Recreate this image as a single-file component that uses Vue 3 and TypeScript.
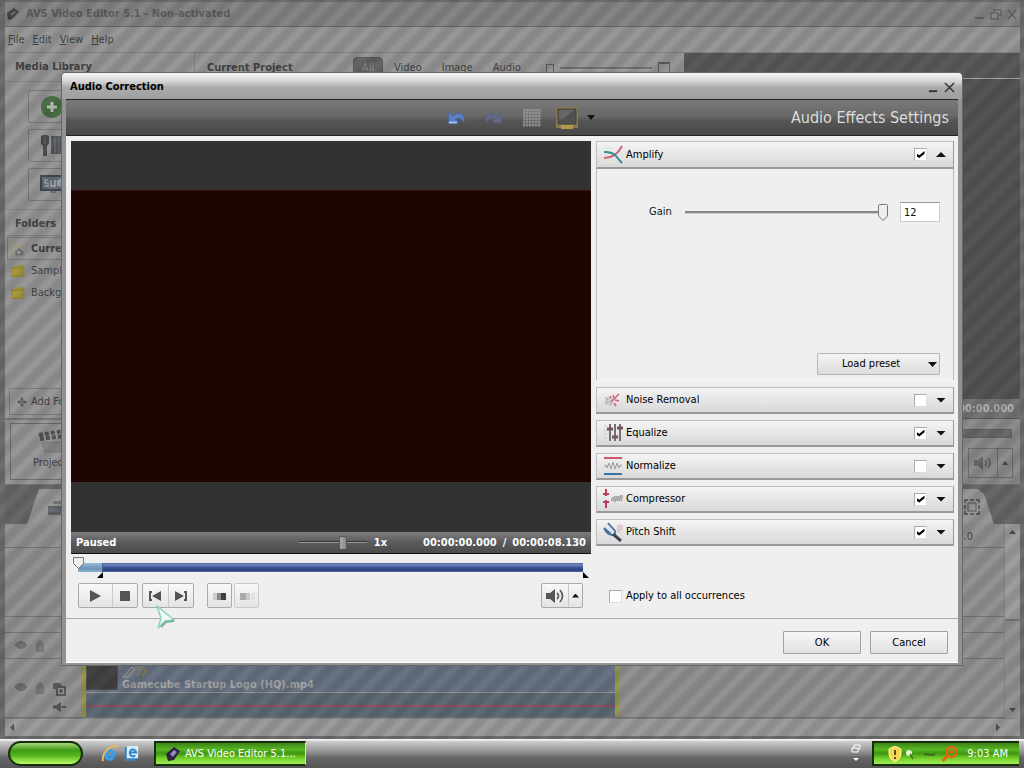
<script setup lang="ts">
import { ref } from 'vue'

interface Effect {
  id: string
  name: string
  enabled: boolean
}

const menus = ['File', 'Edit', 'View', 'Help']
const filters = ['All', 'Video', 'Image', 'Audio']
const folders = ['Current Project', 'Samples', 'Backgrounds']

const amplify = ref(true)
const gain = ref(12)
const speed = ref(67)
const position = ref(0)
const thumbSize = ref(0)
const applyAll = ref(false)
const preset = ref('load')
const effects = ref<Effect[]>([
  { id: 'noise', name: 'Noise Removal', enabled: false },
  { id: 'equalize', name: 'Equalize', enabled: true },
  { id: 'normalize', name: 'Normalize', enabled: false },
  { id: 'compressor', name: 'Compressor', enabled: true },
  { id: 'pitch', name: 'Pitch Shift', enabled: true },
])
</script>

<template>
  <div class="desktop">
    <main class="editor">
      <header class="titlebar">
        <svg class="app-icon" viewBox="0 0 16 16"><path d="M2 7 9 2l5 4-7 7-4 1z" fill="#4c4c4c" /><path d="M5 8l4-3 2 1-4 4z" fill="#777" /><path d="M3 10l3 3" stroke="#3c3c3c" /></svg>
        <span class="app-title">AVS Video Editor 5.1 - Non-activated</span>
        <div class="window-buttons">
          <button aria-label="Minimize"><svg viewBox="0 0 14 14"><path d="M2 11h9" stroke="#666" stroke-width="2" /></svg></button>
          <button aria-label="Restore"><svg viewBox="0 0 14 14"><path d="M5 5V3h7v5h-2M2 6h7v6H2z" fill="none" stroke="#666" stroke-width="1.5" /></svg></button>
          <button aria-label="Close"><svg viewBox="0 0 14 14"><path d="M3 3l8 9M11 3l-8 9" stroke="#666" stroke-width="1.5" /></svg></button>
        </div>
      </header>
      <nav class="menubar">
        <a v-for="m in menus" :key="m" href="#"><u>{{ m[0] }}</u>{{ m.slice(1) }}</a>
      </nav>
      <div class="upper">
        <div class="upper-left">
          <div class="panes">
            <aside class="library">
              <h2>Media Library</h2>
              <div class="tools">
                <button aria-label="Import">
                  <svg viewBox="0 0 24 24"><circle cx="12" cy="12" r="11" fill="#4a7046" /><path d="M12 7v10M7 12h10" stroke="#c2cec0" stroke-width="3" /></svg>
                </button>
                <button aria-label="Capture">
                  <svg viewBox="0 0 24 24"><path d="M1 2q4-2 8 0v8l-2 2v10H3V12L1 10z" fill="#4c5055" /><path d="M11 2h11v18H11z" fill="#565a60" /><path d="M5 3v7M15 4v15M19 4v15" stroke="#7c7c7c" /></svg>
                </button>
                <button aria-label="Search">
                  <svg viewBox="0 0 24 24"><path d="M1 3h23v14H1z" fill="#68727c" stroke="#454b53" stroke-width="2" /><path d="M8 7H5v3h3v3H4M11 7v6h4V7M18 7v6M23 7h-3v6h3" fill="none" stroke="#a5adb5" stroke-width="1.5" /><path d="M10 19h6" fill="none" stroke="#777" stroke-width="2" /></svg>
                </button>
              </div>
              <h2 class="folders-title">Folders</h2>
              <ul class="folders">
                <li v-for="(f, i) in folders" :key="f" :class="{ current: i === 0 }">
                  <svg v-if="i === 0" viewBox="0 0 18 16"><path d="M2 1h13v13H2z" fill="#a09a8a" /><path d="M10 7l5 4v4H6v-4z" fill="#747474" /><circle cx="10" cy="12" r="2" fill="#aaa" /></svg>
                  <svg v-else viewBox="0 0 18 16"><path d="M1 4l7-1 2-2 6 1v12l-14 1z" fill="#9c8e35" /><path d="M3 6h12v7H3z" fill="#aa9c3e" /></svg>
                  <span>{{ f }}</span>
                </li>
              </ul>
              <button class="add-folder"><svg viewBox="0 0 12 12"><path d="M6 1v10M1 6h10" stroke="#555" stroke-width="3" /><path d="M6 3v6M3 6h6" stroke="#8a8a8a" /></svg>Add Folder</button>
            </aside>
            <section class="project">
              <h2>Current Project</h2>
              <div class="filters">
                <button v-for="(f, i) in filters" :key="f" :class="{ active: i === 0 }">{{ f }}</button>
              </div>
              <div class="size-control">
                <i class="small"></i>
                <input v-model="thumbSize" class="bare-range" type="range" aria-label="Thumbnail size" />
                <i class="large"></i>
              </div>
            </section>
          </div>
          <div class="commands">
            <button><svg viewBox="0 0 34 26"><path d="M6 6l24-4M7 10l23-3" stroke="#555" stroke-width="4" stroke-dasharray="4 2" /><path d="M9 13h21l-3 10H12z" fill="#8b8b8b" stroke="#7c7c7c" /></svg>Project</button>
          </div>
        </div>
        <aside class="preview">
          <div class="preview-head"></div>
          <div class="preview-screen"></div>
          <div class="preview-time">00:00:00.000</div>
          <div class="preview-track"></div>
          <div class="preview-volume">
            <button aria-label="Volume"><svg viewBox="0 0 20 16"><path d="M1 5h4l5-4v14l-5-4H1z" fill="#666" /><path d="M12 5q3 3 0 6M15 3q4 5 0 10" fill="none" stroke="#606060" stroke-width="1.5" /></svg></button>
            <button aria-label="Volume menu"><i class="up"></i></button>
          </div>
        </aside>
      </div>
      <div class="tab-strip">
        <div class="tab left"><svg viewBox="0 0 20 18"><path d="M1 8h18v9H1z" fill="#666" /><path d="M6 3h13v3H6z" fill="#777" /><path d="M2 10h10v4H2z" fill="#6c747c" /></svg></div>
        <div class="tab right"><svg viewBox="0 0 16 16"><path d="M1 4V1h3M6 1h4M12 1h3v3M15 6v4M15 12v3h-3M10 15H6M4 15H1v-3M1 10V6" fill="none" stroke="#4e4e4e" stroke-width="1.5" /><path d="M4 4h8v8H4z" fill="none" stroke="#5b5b5b" /></svg></div>
      </div>
      <section class="timeline">
        <div class="ruler"><span>.0</span></div>
        <div class="tracks">
          <div class="track big"></div>
          <div class="track thin"></div>
          <div class="track mid">
            <div class="track-tools">
              <svg viewBox="0 0 14 12"><path d="M1 5q6-7 12 0-6 7-12 0M3 2l2 3M7 1v3M11 2L9 5" fill="#757575" stroke="#6c6c6c" /></svg>
              <svg viewBox="0 0 14 16"><path d="M3 7h8v7H3zM4 7V4q3-4 6 0v3" fill="#808080" stroke="#737373" /></svg>
            </div>
          </div>
          <div class="track main">
            <div class="track-tools">
              <svg viewBox="0 0 14 12"><path d="M1 5q6-7 12 0-6 7-12 0M3 2l2 3M7 1v3M11 2L9 5" fill="#757575" stroke="#6c6c6c" /></svg>
              <svg viewBox="0 0 14 16"><path d="M3 7h8v7H3zM4 7V4q3-4 6 0v3" fill="#808080" stroke="#737373" /></svg>
              <svg class="copy" viewBox="0 0 16 16"><path d="M1 2h7l2 3h4v10H4V8H1z" fill="#5c5c5c" /><path d="M6 7h6v6H6z" fill="#999" /><path d="M9 8v4M7 10h4" stroke="#444" /></svg>
              <svg class="speaker" viewBox="0 0 16 12"><path d="M1 4h4l5-4v12L5 8H1z" fill="#555" /><path d="M11 6h5" stroke="#555" stroke-width="2" /></svg>
            </div>
            <div class="clip">
              <div class="clip-video">
                <div class="clip-thumb"></div>
                <div class="clip-label">
                  <svg viewBox="0 0 28 12"><path d="M1 11L10 1l3 2-7 8z" fill="#777" stroke="#a5a5a5" /><path d="M15 1l4 4-4 5M20 1l4 4-4 5" fill="none" stroke="#8d8060" stroke-width="2" /></svg>
                  <span>Gamecube Startup Logo (HQ).mp4</span>
                </div>
              </div>
              <div class="clip-audio"></div>
            </div>
          </div>
        </div>
        <div class="vscroll"><i class="up"></i><i class="down"></i></div>
        <div class="hscroll"><i class="prev"></i><i class="next"></i></div>
      </section>
    </main>

    <div class="dialog" role="dialog" aria-label="Audio Correction">
      <header class="dialog-title">
        <h1>Audio Correction</h1>
        <button aria-label="Minimize"><svg viewBox="0 0 12 12"><path d="M1 10h9" stroke="#333" stroke-width="2" /></svg></button>
        <button aria-label="Close"><svg viewBox="0 0 12 12"><path d="M1 1l10 10M11 1L1 11" stroke="#333" stroke-width="1.6" /></svg></button>
      </header>
      <div class="dialog-bar">
        <div class="bar-tools">
          <button aria-label="Undo"><svg viewBox="0 0 24 20"><path d="M3 3v12h11l-4-4q6-3 9 4 3-9-5-10-4 0-7 3z" fill="#5c80c6" stroke="#4765a0" /><path d="M3 15h9" stroke="#9cc8ff" stroke-width="2" /></svg></button>
          <button aria-label="Redo"><svg viewBox="0 0 24 20"><path d="M21 3v12H11l4-4q-6-3-10 4Q2 6 10 5q4 0 7 3z" fill="#62698a" stroke="#5a607e" /></svg></button>
          <button class="grid-btn" aria-label="Grid"><svg viewBox="0 0 20 20"><path d="M1 2h18M1 5h18M1 8h18M1 11h18M1 14h18M1 17h18M2 1v18M5 1v18M8 1v18M11 1v18M14 1v18M17 1v18" stroke="#989898" /></svg></button>
          <button class="screen-btn" aria-label="Preview mode"><svg viewBox="0 0 24 24"><path d="M1 1h22v21H1z" fill="#88784c" /><path d="M3 3h18v15H3z" fill="#505050" stroke="#454545" /><path d="M4 4h15l-11 9H4z" fill="#666" /><path d="M6 19h12v4H6z" fill="#b39a4f" /></svg></button>
          <button class="menu-btn" aria-label="Preview menu"><i class="down"></i></button>
        </div>
        <h2>Audio Effects Settings</h2>
      </div>
      <div class="dialog-body">
        <section class="player">
          <div class="video"><div class="frame"></div></div>
          <div class="status">
            <b>Paused</b>
            <input v-model="speed" class="speed-range" type="range" aria-label="Playback speed" />
            <b class="rate">1x</b>
            <b class="times"><span>00:00:00.000</span><span>/</span><span>00:00:08.130</span></b>
          </div>
          <div class="seek">
            <div class="seek-bar"><div class="seek-start"></div></div>
            <input v-model="position" type="range" aria-label="Position" />
            <i class="mark in"></i><i class="mark out"></i>
          </div>
          <div class="transport">
            <div class="group play">
              <button aria-label="Play"><svg viewBox="0 0 16 16"><path d="M3 2l11 6-11 6z" fill="#555" /></svg></button>
              <button aria-label="Stop"><svg viewBox="0 0 16 16"><path d="M3 3h10v10H3z" fill="#555" /></svg></button>
            </div>
            <div class="group step">
              <button aria-label="Previous"><svg viewBox="0 0 16 16"><path d="M3 3v10M2 4h3M2 12h3" stroke="#555" stroke-width="2" /><path d="M14 3v10L5 8z" fill="#555" /></svg></button>
              <button aria-label="Next"><svg viewBox="0 0 16 16"><path d="M13 3v10M14 4h-3M14 12h-3" stroke="#555" stroke-width="2" /><path d="M2 3v10l9-5z" fill="#555" /></svg></button>
            </div>
            <div class="group mark-in"><button aria-label="Mark start"><svg viewBox="0 0 16 16"><path d="M2 5v7M4 5v7" stroke="#aaa" /><path d="M5 5h4v7H5z" fill="#888" /><path d="M9 5h5v7H9z" fill="#3e3e3e" /></svg></button></div>
            <div class="group mark-out"><button aria-label="Mark end" disabled><svg viewBox="0 0 16 16"><path d="M1 5h6v7H1z" fill="#aaa" /><path d="M7 5h4v7H7z" fill="#c9c9c9" /><path d="M13 5v7M15 5v7" stroke="#d6d6d6" /></svg></button></div>
            <div class="group volume">
              <button aria-label="Mute"><svg viewBox="0 0 20 16"><path d="M1 5h4l5-4v14l-5-4H1z" fill="#555" /><path d="M12 5q3 3 0 6M15 2q5 6 0 12" fill="none" stroke="#606060" stroke-width="1.8" /></svg></button>
              <button aria-label="Volume level"><i class="up"></i></button>
            </div>
          </div>
          <svg class="pointer" viewBox="0 0 20 24"><path d="M1 1l17 14-9 1-7 7 3-10z" fill="#eefaf6" stroke="#93cfbc" stroke-width="1.5" /><path d="M5 22l5-5 8-1" fill="none" stroke="#6fb5a2" stroke-width="2" /></svg>
        </section>

        <section class="settings">
          <div class="effect open">
            <svg class="effect-icon" viewBox="0 0 20 20"><path d="M1 3h10M1 17h10" stroke="#dce8e0" stroke-width="2" /><path d="M1 13Q13 13 19 1" fill="none" stroke="#d16479" stroke-width="2" /><path d="M1 7q9 0 12 4t6 7" fill="none" stroke="#318e97" stroke-width="2" /></svg>
            <label for="amplify">Amplify</label>
            <input id="amplify" v-model="amplify" type="checkbox" />
            <button aria-label="Collapse Amplify"><i class="up"></i></button>
          </div>
          <div class="panel">
            <div class="gain">
              <label for="gain">Gain</label>
              <input id="gain" v-model.number="gain" type="range" min="0" max="12" />
              <input v-model="gain" class="gain-value" type="text" aria-label="Gain value" />
            </div>
            <div class="preset">
              <select v-model="preset" aria-label="Preset"><option value="load">Load preset</option></select>
              <i class="down"></i>
            </div>
          </div>
          <div class="effects">
            <div v-for="e in effects" :key="e.id" class="effect">
              <svg v-if="e.id === 'noise'" class="effect-icon" viewBox="0 0 20 20"><circle cx="6" cy="11" r="4" fill="#cbcbcb" /><path d="M2 7l3 3M2 14l3-2M7 16l1-3" stroke="#a5a5a5" /><path d="M8 12l8-8M10 5l1 3M12 10l4 1M11 13l2 3M7 6l1 2" stroke="#cf6478" stroke-width="1.6" /></svg>
              <svg v-else-if="e.id === 'equalize'" class="effect-icon" viewBox="0 0 20 20"><path d="M1 3h3M1 7h3M1 11h3M1 15h3" stroke="#c5c5c5" /><path d="M7 1v17M12 1v17M17 1v17" stroke="#767070" stroke-width="2" /><path d="M4 6h6M9 14h6M14 5h6" stroke="#76555b" stroke-width="3" /></svg>
              <svg v-else-if="e.id === 'normalize'" class="effect-icon" viewBox="0 0 20 20"><path d="M1 2h18" stroke="#d05a62" stroke-width="2" /><path d="M1 18h18" stroke="#3474a6" stroke-width="2" /><path d="M1 10l2-1 1 3 2-5 2 6 2-7 2 7 2-6 2 5 1-3 2 1" fill="none" stroke="#9c9c9c" /></svg>
              <svg v-else-if="e.id === 'compressor'" class="effect-icon" viewBox="0 0 20 20"><path d="M3 0v7M0 5h6M3 19v-8M0 13h6" stroke="#c03d57" stroke-width="2" /><path d="M8 12l2-4v4l2-5v6l2-6v5l2-5v5l2-6v6l2-6" fill="none" stroke="#9a9a9a" /></svg>
              <svg v-else class="effect-icon" viewBox="0 0 20 20"><path d="M15 3v8M17 2v8M19 3v5" stroke="#d6aab8" /><path d="M1 6l7 6M5 1l7 8q1 4-3 4-5 0-8-7" fill="#dce8f4" stroke="#506f96" stroke-width="1.8" /><path d="M10 12l8 7" stroke="#3b4652" stroke-width="3" /></svg>
              <label :for="e.id">{{ e.name }}</label>
              <input :id="e.id" v-model="e.enabled" type="checkbox" />
              <button :aria-label="'Expand ' + e.name"><i class="down"></i></button>
            </div>
          </div>
          <label class="apply"><input v-model="applyAll" type="checkbox" />Apply to all occurrences</label>
        </section>
      </div>
      <footer class="dialog-actions">
        <button>OK</button>
        <button>Cancel</button>
      </footer>
    </div>

    <footer class="taskbar">
      <button class="start" aria-label="Start"></button>
      <a href="#" class="quick" aria-label="Internet Explorer"><svg viewBox="0 0 18 18"><path d="M13 13q-3 4-7 1-3-4 0-7 4-3 7 1l1 3H6" fill="none" stroke="#3aa0e8" stroke-width="3" /><path d="M2 17Q1 9 8 4t9-2" fill="none" stroke="#e7bd5c" stroke-width="2" /></svg></a>
      <a href="#" class="quick" aria-label="Outlook Express"><svg viewBox="0 0 18 18"><path d="M2 2h13v13l-3 2H2z" fill="#3682bd" /><path d="M4 1h12v13H4z" fill="#d5ecfa" /><path d="M13 11q-2 2-5 0-2-4 1-6 4-1 5 3H8" fill="none" stroke="#3087c7" stroke-width="2" /></svg></a>
      <button class="task"><svg viewBox="0 0 16 16"><path d="M1 8l8-7 6 4-6 9-6 1z" fill="#2d2240" /><path d="M5 8l4-4 3 2-4 5z" fill="#9b87c0" /></svg>AVS Video Editor 5.1...</button>
      <div class="language"><svg viewBox="0 0 10 20"><path d="M3 4V1h6v4H7M1 4h6v4H1z" fill="none" stroke="#fff" /><path d="M2 14h6l-3 3z" fill="#fff" /></svg></div>
      <div class="tray">
        <svg viewBox="0 0 14 16"><path d="M7 0l6 3v5q0 5-6 8-6-3-6-8V3z" fill="#f6d84a" stroke="#fff3b0" /><path d="M7 4v5M7 11v2" stroke="#222" stroke-width="1.5" /></svg>
        <svg viewBox="0 0 14 16"><circle cx="4" cy="7" r="3" fill="#e3f6d6" /><path d="M5 8l3 5" stroke="#447b2b" stroke-width="2" /><path d="M9 2q4 5 1 11" fill="none" stroke="#5da83a" /></svg>
        <svg viewBox="0 0 14 16"><path d="M2 8l8 1 3-1" fill="none" stroke="#3b6c25" stroke-width="2" /></svg>
        <svg class="search" viewBox="0 0 16 16"><circle cx="10" cy="6" r="5" fill="none" stroke="#e86316" stroke-width="2.4" /><path d="M6 10l-5 5M8 6h4" stroke="#e86316" stroke-width="3" /></svg>
        <time>9:03 AM</time>
      </div>
    </footer>
  </div>
</template>

<style>
html, body { margin: 0; background: #777; }
</style>

<style scoped>
* { box-sizing: border-box; }
.desktop {
  position: relative;
  display: flex;
  flex-direction: column;
  min-height: 100vh;
  overflow: hidden;
  font-family: "DejaVu Sans Condensed", "Noto Sans", "DejaVu Sans", sans-serif;
  font-size: 11px;
  line-height: 14px;
  color: #111;
}
button, input, select { font: inherit; color: inherit; margin: 0; }
button { padding: 0; border: 0; background: none; display: flex; align-items: center; justify-content: center; }
h1, h2 { margin: 0; font-size: 11px; line-height: 14px; }
a { color: inherit; text-decoration: none; }
.up, .down, .prev, .next { display: block; width: 9px; height: 5px; background: #111; flex: none; }
.up { clip-path: polygon(50% 0, 100% 100%, 0 100%); }
.down { clip-path: polygon(0 0, 100% 0, 50% 100%); }
.prev, .next { width: 4px; height: 8px; background: #555; }
.prev { clip-path: polygon(0 50%, 100% 0, 100% 100%); }
.next { clip-path: polygon(0 0, 100% 50%, 0 100%); }

/* Editor window, dimmed while the dialog is open */
.editor {
  position: relative;
  flex: 1;
  display: flex;
  flex-direction: column;
  border: solid #707070;
  border-width: 2px 4px 3px 5px;
  background: #9a9a9a;
  color: #444;
}
.editor::after {
  content: "";
  position: absolute;
  inset: -2px -4px -3px -5px;
  pointer-events: none;
  background: repeating-linear-gradient(135deg, rgba(0, 0, 0, 0.12) 0 4px, rgba(0, 0, 0, 0.02) 9px 11px, rgba(0, 0, 0, 0.12) 16px);
}
.titlebar { display: flex; align-items: center; height: 25px; background: #888; border-bottom: 1px solid #6c6c6c; padding-right: 1px; }
.app-icon { width: 16px; height: 16px; margin-right: 5px; }
.app-title { flex: 1; font-weight: bold; color: #5f5f5f; }
.window-buttons { display: flex; gap: 2px; }
.window-buttons svg { width: 14px; height: 14px; }
.menubar { display: flex; align-items: center; gap: 8px; height: 26px; padding-left: 3px; border-bottom: 1px solid #858585; }
.upper { display: flex; height: 431px; }
.upper-left { flex: 1; min-width: 0; display: flex; flex-direction: column; }
.panes { flex: 1; display: flex; }
.library { width: 190px; display: flex; flex-direction: column; border-right: 1px solid #858585; }
.library h2 { height: 29px; padding: 7px 0 0 10px; border-bottom: 1px solid #868686; }
.tools { display: flex; flex-direction: column; gap: 6px; padding: 8px 23px; }
.tools button { height: 33px; border: 1px solid #7b7b7b; border-radius: 2px; justify-content: flex-start; padding-left: 11px; }
.tools svg { width: 24px; height: 24px; }
.library .folders-title { height: 27px; border-top: 1px solid #868686; }
.folders { list-style: none; margin: 0; padding: 1px 2px; }
.folders li { display: flex; align-items: center; gap: 5px; height: 22px; padding-left: 2px; border: 1px solid transparent; }
.folders .current { height: 23px; border-color: #7d7d7d; font-weight: bold; }
.folders svg { width: 16px; height: 16px; }
.add-folder { height: 27px; margin: auto 4px 3px; border: 1px solid #7b7b7b; justify-content: flex-start; padding-left: 7px; gap: 4px; }
.add-folder svg { width: 10px; height: 10px; }
.project { flex: 1; display: flex; align-items: flex-start; padding: 4px 14px 0 12px; }
.project h2 { width: 146px; padding-top: 4px; }
.filters { display: flex; flex: 1; gap: 1px; }
.filters button { height: 22px; padding: 0 9px 0 10px; color: #444; }
.filters .active { width: 30px; padding: 0; background: #666; color: #999; border: 1px solid #5c5c5c; border-radius: 4px 4px 0 0; }
.size-control { display: flex; align-items: center; gap: 6px; height: 22px; width: 124px; }
.small { width: 8px; height: 9px; border: 1px solid #606060; }
.large { width: 12px; height: 12px; border: 1px solid #606060; border-top-width: 2px; }
.bare-range { appearance: none; flex: 1; min-width: 0; height: 3px; background: #737373; border-bottom: 1px solid #aaa; }
.bare-range::-webkit-slider-thumb { appearance: none; width: 1px; height: 1px; }
.commands { height: 66px; border-top: 2px solid #7c7c7c; padding: 3px 5px; }
.commands button { width: 80px; height: 57px; border: 1px solid #707070; flex-direction: column; padding-bottom: 6px; }
.commands svg { width: 34px; height: 28px; }
.preview { width: 34%; flex: none; display: flex; flex-direction: column; max-width: 336px; background: #8f8f8f; }
.preview-head { height: 26px; background: #5c5c5c; border-bottom: 1px solid #aaa; }
.preview-screen { flex: 1; background: #575757; }
.preview-time { height: 20px; padding: 3px 6px 0; text-align: right; font-weight: bold; color: #b4b4b4; background: #787878; border-bottom: 1px solid #5c5c5c; }
.preview-track { height: 9px; margin: 10px 8px 10px; background: #6c6c6c; border: 1px solid #636363; }
.preview-volume { display: flex; justify-content: flex-end; padding: 0 7px 6px; }
.preview-volume button { width: 30px; height: 30px; border: 1px solid #6d6d6d; }
.preview-volume button + button { width: 15px; border-left: 0; }
.preview-volume svg { width: 20px; height: 16px; }
.preview-volume .up, .vscroll i { background: #505050; width: 7px; height: 4px; }
.tab-strip { display: flex; justify-content: space-between; align-items: flex-end; height: 40px; background: #6a6a6a; border-top: 1px solid #777; }
.tab { display: flex; align-items: center; width: 80px; height: 35px; background: #9a9a9a; }
.tab.left { margin-left: 22px; padding-left: 20px; clip-path: polygon(12px 0, 100% 0, 100% 100%, 0 100%); }
.tab.right { margin-right: 26px; padding-left: 50px; clip-path: polygon(0 0, 64px 0, 70px 5px, 100% 100%, 0 100%); }
.tab svg { width: 16px; height: 16px; }
.tab.left svg { width: 20px; height: 18px; }
.timeline { flex: 1; display: grid; grid-template: 24px minmax(0, 1fr) 18px / minmax(0, 1fr) 16px; background: #959595; }
.ruler { border-bottom: 1px solid #757575; padding: 6px 31px 0 0; text-align: right; }
.tracks { grid-row: 2; display: flex; flex-direction: column; }
.track { border-bottom: 1px solid #757575; }
.big { flex: 70; }
.thin { flex: 16; }
.mid { flex: 26; }
.main { flex: 60; display: flex; }
.track-tools { display: grid; grid-template-columns: 14px 14px 18px; column-gap: 5px; align-content: center; width: 76px; height: 100%; padding-left: 9px; flex: none; }
.main .track-tools { align-content: end; row-gap: 4px; padding-bottom: 4px; }
.track-tools svg { width: 14px; height: 14px; }
.track-tools .copy { width: 16px; height: 16px; }
.track-tools .speaker { grid-column: 3; height: 12px; }
.clip { flex: none; width: 54%; border: solid #9a9a50; border-width: 0 5px; background: #6a7586; display: flex; flex-direction: column; }
.clip-video { flex: 35; min-height: 0; display: flex; align-items: flex-end; gap: 4px; border-bottom: 1px solid #999; }
.clip-thumb { width: 32px; height: 26px; margin-bottom: 2px; background: #444; border: 1px solid #555; }
.clip-label { display: flex; flex-direction: column; color: #a9a9a9; font-weight: bold; }
.clip-label svg { width: 28px; height: 12px; }
.clip-audio { flex: 26; background: linear-gradient(transparent 50%, #995263 50% 60%, transparent 60%) #616c77; }
.vscroll { grid-column: 2; grid-row: 1 / 3; display: flex; flex-direction: column; justify-content: space-between; align-items: center; padding: 6px 0; background: linear-gradient(#a1a1a1 49%, #7c7c7c 49% 50%, #969696 50%); border-left: 1px solid #888; }
.hscroll { grid-column: 1 / 3; display: flex; justify-content: space-between; align-items: center; padding: 0 20px 0 5px; border-top: 1px solid #888; background: #9f9f9f; }

/* Dialog */
.dialog {
  position: absolute;
  top: 73px;
  left: 62px;
  right: 62px;
  border: solid #929292;
  border-width: 0 4px 2px;
  border-radius: 4px 4px 0 0;
  background: #efefef;
  box-shadow: inset 0 -1px #fff, 0 0 0 1px #666;
}
.dialog-title { display: flex; align-items: center; gap: 5px; height: 26px; margin: 0 -4px; padding: 2px 7px 0 8px; border-radius: 4px 4px 0 0; background: linear-gradient(#f5f5f5, #d7d7d7 30%, #aaa 55%, #a0a0a0); }
.dialog-title h1 { flex: 1; color: #000; }
.dialog-title svg { width: 11px; height: 11px; display: block; }
.dialog-bar { position: relative; display: flex; align-items: center; justify-content: flex-end; height: 37px; padding-right: 9px; background: linear-gradient(#7a7a7a, #686868 45%, #555 60%, #484848); border: solid #222; border-width: 1px 0; }
.dialog-bar h2 { font: 16px/20px "DejaVu Sans Condensed", "Noto Sans", sans-serif; color: #ddd; }
.bar-tools { position: absolute; inset: 0; display: flex; align-items: center; justify-content: center; padding-left: 16px; pointer-events: none; }
.bar-tools button { width: 36px; pointer-events: auto; }
.bar-tools svg { width: 22px; height: 20px; }
.bar-tools .grid-btn { width: 42px; }
.bar-tools .screen-btn { width: 28px; }
.bar-tools .menu-btn { width: 20px; }
.bar-tools .grid-btn svg { width: 20px; height: 20px; }
.bar-tools .screen-btn svg { width: 24px; height: 24px; }
.menu-btn .down { width: 8px; }
.dialog-body { display: grid; grid-template-columns: minmax(0, 520fr) minmax(0, 358fr); gap: 5px; padding: 5px 4px 0 5px; height: 483px; border-bottom: 1px solid #aaa; }
.player { position: relative; display: flex; flex-direction: column; }
.video { height: 391px; padding: 49px 0 50px; background: #323232; }
.frame { height: 100%; background: #1e0500; border-top: 1px solid #331318; }
.status { display: flex; align-items: center; height: 22px; padding: 0 5px; color: #fff; background: linear-gradient(#7d7d7d, #5b5b5b 50%, #4b4b4b); border-bottom: 1px solid #111; }
.status .rate { margin-right: 36px; }
.times { display: flex; gap: 6px; }
.speed-range { appearance: none; width: 68px; height: 16px; margin: 0 7px 0 auto; background: linear-gradient(transparent 6px, #363636 6px 7px, #999 7px 8px, transparent 8px); }
.speed-range::-webkit-slider-thumb { appearance: none; width: 8px; height: 14px; background: linear-gradient(90deg, #aaa, #888); border: 1px solid #555; border-radius: 2px; }
.seek { position: relative; height: 28px; padding: 9px 8px 0 7px; }
.seek-bar { height: 9px; background: linear-gradient(#526ba5, #7183b8 25%, #41589a 45%, #273e7e 80%, #5770a0); }
.seek-start { width: 25px; height: 9px; background: linear-gradient(#9ab9da, #6d93bb 60%, #8cb0cd); border-right: 1px solid #44648d; }
.seek input { appearance: none; position: absolute; left: 2px; right: 3px; top: 3px; height: 12px; background: none; width: calc(100% - 5px); }
.seek input::-webkit-slider-thumb { appearance: none; width: 11px; height: 12px; background: url("data:image/svg+xml,%3Csvg xmlns='http://www.w3.org/2000/svg' viewBox='0 0 11 12'%3E%3Cpath d='M.5.5h10v6l-5 5-5-5z' fill='%23ededed' stroke='%23777'/%3E%3C/svg%3E"); }
.mark { position: absolute; top: 18px; width: 6px; height: 6px; background: #000; }
.mark.in { left: 26px; clip-path: polygon(100% 0, 100% 100%, 0 100%); }
.mark.out { right: 2px; clip-path: polygon(0 0, 100% 100%, 0 100%); }
.transport { display: flex; padding: 1px 8px 0 7px; }
.group { display: flex; height: 25px; border: 1px solid #aaa; border-radius: 2px; background: linear-gradient(#f8f8f8, #e4e4e4); }
.group button { flex: 1; }
.group button + button { border-left: 1px solid #c9c9c9; }
.group svg { width: 16px; height: 16px; }
.group.play { width: 60px; margin-right: 4px; }
.group.play button:first-child { flex: 4 1 0; }
.group.play button:last-child { flex: 3 1 0; }
.group.step { width: 52px; margin-right: 13px; }
.mark-in { width: 25px; margin-right: 2px; }
.mark-out { width: 25px; border-color: #ccc; }
.group.volume { width: 42px; margin-left: auto; }
.volume button:last-child { flex: none; width: 14px; }
.group.volume svg { width: 20px; height: 16px; }
.volume .up { width: 7px; height: 4px; }
.pointer { position: absolute; left: 85px; top: 464px; width: 20px; height: 24px; pointer-events: none; }

.settings { display: flex; flex-direction: column; }
.effect { display: flex; align-items: center; height: 27px; padding: 0 6px; flex: none; border: 1px solid #bdbdbd; border-bottom: 2px solid #999; border-right-color: #999; background: linear-gradient(#f4f4f4, #e6e6e6 50%, #d9d9d9); color: #000; }
.effect.open { height: 28px; }
.effect-icon { width: 20px; height: 20px; margin-right: 3px; }
.effect label { flex: 1; }
.effect button { width: 20px; height: 20px; margin-left: 4px; margin-right: -4px; }
.effect .up, .effect .down { width: 10px; }
input[type="checkbox"] { appearance: none; flex: none; display: grid; place-items: center; width: 13px; height: 13px; background: #fff; border: 1px solid #ddd; border-top-color: #aaa; border-left-color: #aaa; }
input[type="checkbox"]:checked::before { content: ""; width: 8px; height: 7px; background: #000; clip-path: polygon(0 35%, 35% 60%, 100% 0, 100% 40%, 35% 100%, 0 75%); }
.panel { height: 211px; flex: none; display: flex; flex-direction: column; justify-content: space-between; padding: 33px 13px 5px 52px; border: solid #bbb; border-width: 0 1px; }
.gain { display: flex; align-items: center; height: 20px; }
.gain label { width: 36px; }
.gain input[type="range"] { appearance: none; flex: 1; min-width: 0; height: 18px; background: linear-gradient(transparent 8px, #888 8px 10px, #ccc 10px 11px, transparent 11px); }
.gain input[type="range"]::-webkit-slider-thumb { appearance: none; width: 10px; height: 18px; background: url("data:image/svg+xml,%3Csvg xmlns='http://www.w3.org/2000/svg' viewBox='0 0 10 18'%3E%3Cpath d='M1.5 1.5h7q1 0 1 1V13L5 17.500.5 13V2.500q0-1 1-1z' fill='%23eee' stroke='%23777'/%3E%3C/svg%3E"); }
.gain-value { width: 40px; height: 20px; margin-left: 12px; padding: 0 3px; border: 1px solid #ccc; border-top-color: #999; background: #fff; }
.preset { position: relative; align-self: flex-end; width: 123px; }
.preset select { appearance: none; display: block; width: 100%; height: 22px; padding: 0 0 0 24px; border: 1px solid #b5b5b5; border-radius: 1px; background: linear-gradient(#f4f4f4, #dcdcdc); color: #000; }
.preset .down { position: absolute; right: 3px; top: 9px; pointer-events: none; }
.effects { display: flex; flex-direction: column; gap: 6px; padding-top: 6px; border-top: 1px solid #f7f7f7; }
.apply { display: flex; align-items: center; gap: 4px; margin: 43px 0 0 13px; color: #000; }
.dialog-actions { display: flex; justify-content: flex-end; gap: 9px; padding: 12px 10px 9px; }
.dialog-actions button { width: 78px; height: 23px; border: 1px solid #a0a0a0; border-radius: 1px; background: linear-gradient(#f6f6f6, #e2e2e2); color: #000; }

/* Taskbar */
.taskbar { display: flex; align-items: center; height: 29px; padding: 0 5px 0 8px; background: linear-gradient(#fff, #c8c8c8 10%, #999 40%, #666 65%, #555); color: #fff; }
.start, .task, .tray { height: 25px; border: 2px solid #172e0a; background: linear-gradient(#3c8218, #58b622 30%, #3f9710 50%, #73cf28 72%, #a0ed58); }
.start { width: 75px; border-radius: 13px; background: linear-gradient(#a6d77b, #3e9b15 35%, #55b51d 60%, #b9ff67); margin-right: 18px; }
.quick { display: flex; margin-right: 5px; }
.quick svg { width: 17px; height: 17px; }
.task { width: 152px; margin-left: 9px; gap: 4px; justify-content: flex-start; padding-left: 9px; border-right: 1px solid #c6f0a0; }
.task svg { width: 16px; height: 16px; }
.language { margin-left: auto; }
.language svg { display: block; width: 10px; height: 20px; }
.tray { display: flex; align-items: center; gap: 3px; width: 147px; margin-left: 11px; padding: 0 11px 0 14px; border-right: 0; }
.tray svg { width: 14px; height: 16px; }
.tray .search { width: 17px; margin-left: 2px; }
.tray time { margin-left: auto; }
</style>
